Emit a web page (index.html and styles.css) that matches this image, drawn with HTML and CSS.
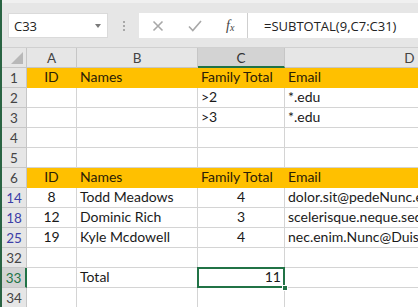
FILE: index.html
```html
<!DOCTYPE html>
<html>
<head>
<meta charset="utf-8">
<link rel="stylesheet" href="styles.css">
</head>
<body>
<div class="app">
  <div class="toolbar">
    <div class="namebox">
      <span class="ref">C33</span>
      <span class="caret"></span>
    </div>
    <div class="grip"><i></i><i></i><i></i></div>
    <div class="fxbox">
      <svg class="tool" width="12" height="12" viewBox="0 0 12 12"><path d="M1.5 1.5 L10.5 10.5 M10.5 1.5 L1.5 10.5" stroke="#a8a8a8" stroke-width="1.6" fill="none"/></svg>
      <svg class="tool check" width="14" height="12" viewBox="0 0 14 12"><path d="M1 6.5 L4.8 10.5 L13 1" stroke="#a8a8a8" stroke-width="1.6" fill="none"/></svg>
      <span class="fx">f<sub>x</sub></span>
    </div>
    <div class="formula">=SUBTOTAL(9,C7:C31)</div>
  </div>
  <div class="sheet">
    <div class="corner"><span class="tri"></span></div>
    <div class="colhead">A</div>
    <div class="colhead">B</div>
    <div class="colhead sel">C</div>
    <div class="colhead">D</div>

    <div class="rowhead">1</div>
    <div class="cell hdr center">ID</div>
    <div class="cell hdr">Names</div>
    <div class="cell hdr">Family Total</div>
    <div class="cell hdr">Email</div>

    <div class="rowhead">2</div>
    <div class="cell"></div>
    <div class="cell"></div>
    <div class="cell">&gt;2</div>
    <div class="cell">*.edu</div>

    <div class="rowhead">3</div>
    <div class="cell"></div>
    <div class="cell"></div>
    <div class="cell">&gt;3</div>
    <div class="cell">*.edu</div>

    <div class="rowhead">4</div>
    <div class="cell"></div>
    <div class="cell"></div>
    <div class="cell"></div>
    <div class="cell"></div>

    <div class="rowhead">5</div>
    <div class="cell"></div>
    <div class="cell"></div>
    <div class="cell"></div>
    <div class="cell"></div>

    <div class="rowhead">6</div>
    <div class="cell hdr center">ID</div>
    <div class="cell hdr">Names</div>
    <div class="cell hdr">Family Total</div>
    <div class="cell hdr">Email</div>

    <div class="rowhead filtered">14</div>
    <div class="cell center">8</div>
    <div class="cell">Todd Meadows</div>
    <div class="cell center">4</div>
    <div class="cell">dolor.sit@pedeNunc.edu</div>

    <div class="rowhead filtered">18</div>
    <div class="cell center">12</div>
    <div class="cell">Dominic Rich</div>
    <div class="cell center">3</div>
    <div class="cell">scelerisque.neque.sed@tempus.edu</div>

    <div class="rowhead filtered">25</div>
    <div class="cell center">19</div>
    <div class="cell">Kyle Mcdowell</div>
    <div class="cell center">4</div>
    <div class="cell">nec.enim.Nunc@Duis.edu</div>

    <div class="rowhead">32</div>
    <div class="cell"></div>
    <div class="cell"></div>
    <div class="cell"></div>
    <div class="cell"></div>

    <div class="rowhead active">33</div>
    <div class="cell"></div>
    <div class="cell">Total</div>
    <div class="cell right selected">11<span class="handle"></span></div>
    <div class="cell"></div>

    <div class="rowhead">34</div>
    <div class="cell"></div>
    <div class="cell"></div>
    <div class="cell"></div>
    <div class="cell"></div>
  </div>
</div>
</body>
</html>
```

FILE: styles.css
```css
* { box-sizing: border-box; }
html, body {
  margin: 0;
  padding: 0;
  width: 418px;
  height: 307px;
  overflow: hidden;
  background: #ffffff;
}
.app {
  width: 418px;
  height: 307px;
  border-left: 2px solid #2a6443;
  overflow: hidden;
  font-family: Lato, "Liberation Sans", sans-serif;
}
.toolbar {
  height: 48px;
  background: #e6e6e6;
  border-top: 3px solid #f0f0f0;
  border-bottom: 1px solid #d0d0d0;
  display: flex;
  align-items: flex-start;
  padding-top: 10px;
  padding-left: 6px;
}
.namebox {
  width: 100px;
  height: 25px;
  background: #fff;
  border: 1px solid #dadada;
  display: flex;
  align-items: center;
  justify-content: space-between;
  padding: 0 6px 0 5px;
  font-family: "Open Sans", "Noto Sans", sans-serif;
  font-size: 13px;
  color: #222;
}
.caret {
  width: 0;
  height: 0;
  border-left: 3.5px solid transparent;
  border-right: 3.5px solid transparent;
  border-top: 4px solid #7a7a7a;
}
.grip {
  width: 31px;
  height: 25px;
  display: flex;
  flex-direction: column;
  align-items: center;
  justify-content: center;
  gap: 2px;
}
.grip i {
  display: block;
  width: 2px;
  height: 2px;
  background: #a8a8a8;
}
.fxbox {
  width: 109px;
  height: 25px;
  background: #fff;
  border-right: 1px solid #cfcfcf;
  display: flex;
  align-items: center;
  padding-left: 13px;
}
.tool.check { margin-left: 24px; }
.fx {
  margin-left: 24px;
  font-family: "Liberation Serif", serif;
  font-style: italic;
  font-size: 14px;
  color: #444;
}
.fx sub {
  font-size: 10px;
  vertical-align: -1px;
}
.formula {
  flex: 1;
  height: 25px;
  background: #fff;
  padding-left: 16px;
  display: flex;
  align-items: center;
  font-family: "Open Sans", "Noto Sans", sans-serif;
  font-size: 13px;
  color: #222;
  white-space: nowrap;
}
.sheet {
  display: grid;
  grid-template-columns: 25px 50px 121px 87px 250px;
  grid-auto-rows: 20px;
  font-size: 14px;
  color: #1a1a1a;
}
.corner, .colhead, .rowhead {
  background: #e6e6e6;
  color: #444;
  font-size: 13.5px;
}
.corner {
  position: relative;
  border-right: 1px solid #c6c6c6;
  border-bottom: 1px solid #c6c6c6;
}
.tri {
  position: absolute;
  right: 3px;
  bottom: 3px;
  width: 0;
  height: 0;
  border-left: 12px solid transparent;
  border-bottom: 12px solid #b8b8b8;
}
.colhead {
  display: flex;
  align-items: center;
  justify-content: center;
  border-right: 1px solid #c6c6c6;
  border-bottom: 1px solid #c6c6c6;
  padding-top: 1px;
}
.colhead.sel {
  background: #d3d3d3;
  border-bottom: 2px solid #217346;
  color: #333;
}
.rowhead {
  display: flex;
  align-items: center;
  justify-content: center;
  border-right: 1px solid #c6c6c6;
  border-bottom: 1px solid #c6c6c6;
}
.rowhead.filtered { color: #3c3fa8; }
.rowhead.active {
  background: #d3d3d3;
  border-right: 2px solid #217346;
  color: #217346;
}
.cell {
  border-right: 1px solid #d4d4d4;
  border-bottom: 1px solid #d4d4d4;
  display: flex;
  align-items: flex-end;
  padding: 0 3px 2px 3px;
  line-height: 16px;
  white-space: nowrap;
  overflow: hidden;
}
.cell.hdr {
  background: #ffc000;
  border-color: #ffc000;
  color: #2b2006;
}
.cell.center { justify-content: center; }
.cell.right { justify-content: flex-end; }
.cell.selected {
  position: relative;
  overflow: visible;
}
.cell.selected::before {
  content: "";
  position: absolute;
  left: -1px;
  top: -1px;
  right: -1px;
  bottom: -1px;
  border: 2px solid #217346;
}
.handle {
  position: absolute;
  right: -4px;
  bottom: -4px;
  width: 6px;
  height: 6px;
  background: #217346;
  border: 1px solid #fff;
  z-index: 2;
}
```
